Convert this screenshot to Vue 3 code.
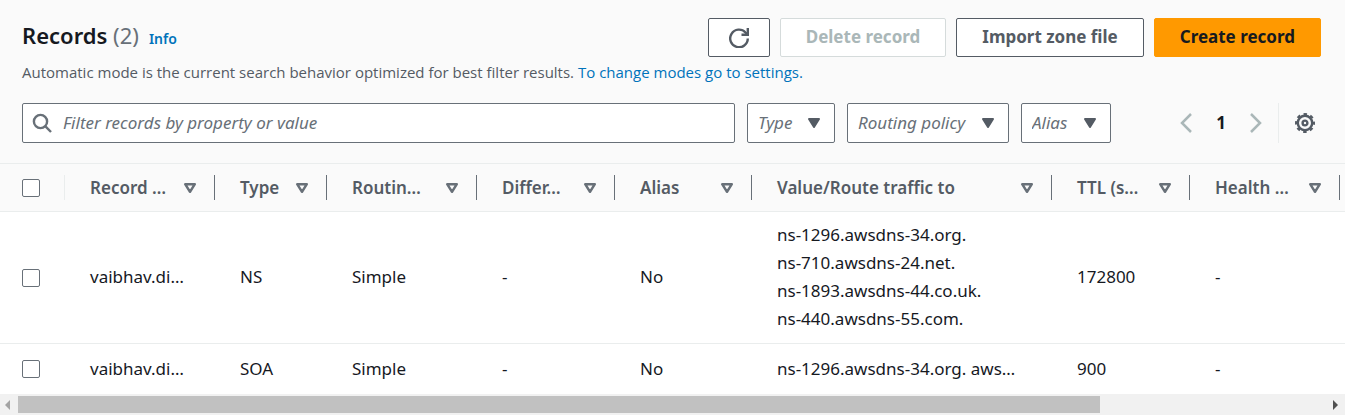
<script setup>
import { ref } from 'vue'

const filters = [
  { id: 'type', label: 'Type' },
  { id: 'routing', label: 'Routing policy' },
  { id: 'alias', label: 'Alias' },
]

const columns = [
  { id: 'name', label: 'Record …' },
  { id: 'type', label: 'Type' },
  { id: 'routing', label: 'Routin…' },
  { id: 'differ', label: 'Differ…' },
  { id: 'alias', label: 'Alias' },
  { id: 'value', label: 'Value/Route traffic to' },
  { id: 'ttl', label: 'TTL (s…' },
  { id: 'health', label: 'Health …' },
]

const records = [
  {
    name: 'vaibhav.di…',
    type: 'NS',
    routing: 'Simple',
    differ: '-',
    alias: 'No',
    value: [
      'ns-1296.awsdns-34.org.',
      'ns-710.awsdns-24.net.',
      'ns-1893.awsdns-44.co.uk.',
      'ns-440.awsdns-55.com.',
    ],
    ttl: '172800',
    health: '-',
  },
  {
    name: 'vaibhav.di…',
    type: 'SOA',
    routing: 'Simple',
    differ: '-',
    alias: 'No',
    value: ['ns-1296.awsdns-34.org. aws…'],
    ttl: '900',
    health: '-',
  },
]

const query = ref('')
const selected = ref([])

function toggleAll(event) {
  selected.value = event.target.checked ? records.map((record) => record.type) : []
}
</script>

<template>
  <main class="records">
    <header class="top">
      <div class="heading-row">
        <div class="heading">
          <h2>Records <span class="count">(2)</span></h2>
          <a class="info" href="#info">Info</a>
        </div>
        <div class="actions">
          <button class="btn btn-icon" type="button" aria-label="Refresh">
            <svg width="20" height="20" viewBox="0 0 20 20" fill="none" stroke="currentColor" stroke-width="2.4">
              <path d="M18.8 10.5A8.8 8.8 0 1 1 16.5 4.5L18.4 6.4" />
              <path d="M12.5 6.8h6.3V0" />
            </svg>
          </button>
          <button class="btn" type="button" disabled>Delete record</button>
          <button class="btn" type="button">Import zone file</button>
          <button class="btn btn-primary" type="button">Create record</button>
        </div>
      </div>
      <p class="description">
        Automatic mode is the current search behavior optimized for best filter results.
        <a href="#settings">To change modes go to settings.</a>
      </p>
      <div class="toolbar">
        <div class="search">
          <svg width="20" height="20" viewBox="0 0 20 20" fill="none" stroke="currentColor" stroke-width="2.4">
            <circle cx="8.5" cy="8.5" r="6.6" />
            <path d="M13.2 13.2 19 19" />
          </svg>
          <input v-model="query" type="text" aria-label="Filter records" placeholder="Filter records by property or value" />
        </div>
        <div v-for="filter in filters" :key="filter.id" class="filter" :class="filter.id">
          <select :aria-label="filter.label">
            <option>{{ filter.label }}</option>
          </select>
          <svg class="caret" width="14" height="12" viewBox="0 0 14 12" fill="currentColor" stroke="currentColor" stroke-width="2" stroke-linejoin="round">
            <path d="M2 2h10L7 10z" />
          </svg>
        </div>
        <nav class="pagination" aria-label="Pages">
          <button type="button" class="page-arrow" aria-label="Previous page">
            <svg width="12" height="20" viewBox="0 0 12 20" fill="none" stroke="currentColor" stroke-width="2.5">
              <path d="M11 1 2 10l9 9" />
            </svg>
          </button>
          <button type="button" class="page">1</button>
          <button type="button" class="page-arrow" aria-label="Next page">
            <svg width="12" height="20" viewBox="0 0 12 20" fill="none" stroke="currentColor" stroke-width="2.5">
              <path d="m1 1 9 9-9 9" />
            </svg>
          </button>
        </nav>
        <button type="button" class="settings" aria-label="Preferences">
          <svg width="20" height="20" viewBox="0 0 20 20" fill="none" stroke="currentColor">
            <circle cx="10" cy="10" r="7.2" stroke-width="2.4" />
            <circle cx="10" cy="10" r="9" stroke-width="2" stroke-dasharray="3.534 3.534" stroke-dashoffset="1.767" />
            <circle cx="10" cy="10" r="2.4" stroke-width="2.4" />
          </svg>
        </button>
      </div>
    </header>

    <div class="table-scroll">
      <table>
        <colgroup>
          <col class="col-check" />
          <col v-for="column in columns" :key="column.id" :class="'col-' + column.id" />
          <col />
        </colgroup>
        <thead>
          <tr>
            <th class="check-head">
              <input type="checkbox" aria-label="Select all records" :checked="selected.length === records.length" @change="toggleAll" />
            </th>
            <th v-for="column in columns" :key="column.id" scope="col">
              <div class="head">
                <span>{{ column.label }}</span>
                <svg width="14" height="12" viewBox="0 0 14 12" fill="none" stroke="currentColor" stroke-width="2.5" stroke-linejoin="round">
                  <path d="M2.2 2.2h9.6L7 9.8z" />
                </svg>
              </div>
            </th>
            <th class="rest" aria-hidden="true"></th>
          </tr>
        </thead>
        <tbody>
          <tr v-for="record in records" :key="record.type">
            <td class="check">
              <input v-model="selected" type="checkbox" :value="record.type" :aria-label="'Select ' + record.type + ' record'" />
            </td>
            <td v-for="column in columns" :key="column.id">
              <template v-if="column.id === 'value'">
                <div v-for="line in record.value" :key="line">{{ line }}</div>
              </template>
              <template v-else>{{ record[column.id] }}</template>
            </td>
            <td class="rest" aria-hidden="true"></td>
          </tr>
        </tbody>
      </table>
    </div>
    <div class="scrollbar">
      <svg class="scroll-back" width="18" height="18" viewBox="0 0 18 18"><path d="M10 4v10L5 9z" fill="currentColor" /></svg>
      <div class="track"><div class="thumb"></div></div>
      <svg class="scroll-forward" width="18" height="18" viewBox="0 0 18 18"><path d="M6 4v10l5-5z" fill="currentColor" /></svg>
    </div>
  </main>
</template>

<style>
body {
  margin: 0;
  background: #fff;
}
</style>

<style scoped>
.records {
  font-family: "Noto Sans", "Open Sans", sans-serif;
  font-size: 17px;
  line-height: 28px;
  color: #16191f;
  overflow: hidden;
}
button,
input,
select {
  font: inherit;
  color: inherit;
  box-sizing: border-box;
}
button {
  cursor: pointer;
}
a {
  color: #0073bb;
  text-decoration: none;
}
svg {
  display: block;
  flex: none;
}
.top {
  background: #fafafa;
  padding: 18px 24px 20px 22px;
  border-bottom: 1px solid #eaeded;
}
.heading-row {
  display: flex;
  justify-content: space-between;
}
.heading {
  display: flex;
  align-items: baseline;
  gap: 10px;
}
h2 {
  margin: 0;
  font-size: 22px;
  line-height: 34px;
  font-weight: 600;
}
.count {
  font-weight: 400;
  color: #687078;
}
.info {
  font-size: 14px;
  font-weight: 600;
}
.actions {
  display: flex;
  gap: 10px;
}
.btn {
  height: 39px;
  padding: 0 25px 2px;
  border: 1px solid #545b64;
  border-radius: 2px;
  background: #fff;
  color: #545b64;
  font-weight: 700;
  line-height: 25px;
  white-space: nowrap;
}
.btn-icon {
  padding: 0 20px;
}
.btn:disabled {
  border-color: #d5dbdb;
  color: #aab7b8;
  cursor: default;
}
.btn-primary {
  background: #ff9900;
  border-color: #ff9900;
  color: #16191f;
}
.description {
  margin: 3px 0 18px;
  font-family: "Open Sans", "Noto Sans", sans-serif;
  font-size: 15px;
  line-height: 25px;
  color: #545b64;
}
.toolbar {
  display: flex;
  gap: 12px;
}
.search {
  flex: 1;
  display: flex;
  align-items: center;
  gap: 11px;
  height: 40px;
  box-sizing: border-box;
  padding: 0 9px;
  border: 1px solid #687078;
  border-radius: 2px;
  background: #fff;
  color: #687078;
}
.search input {
  flex: 1;
  min-width: 0;
  padding: 0;
  border: 0;
  outline: 0;
  background: transparent;
}
.search input::placeholder {
  color: #687078;
  font-style: italic;
  opacity: 1;
}
.filter {
  position: relative;
}
.filter select {
  appearance: none;
  width: 100%;
  height: 40px;
  padding: 0 0 0 10px;
  border: 1px solid #687078;
  border-radius: 2px;
  background: #fff;
  color: #687078;
  font-style: italic;
}
.caret {
  position: absolute;
  right: 14px;
  top: 14px;
  color: #545b64;
  pointer-events: none;
}
.filter.type {
  width: 88px;
}
.filter.routing {
  width: 162px;
}
.filter.alias {
  width: 90px;
}
.pagination {
  display: flex;
  align-items: center;
  margin-left: 57px;
}
.pagination button,
.settings {
  padding: 0;
  border: 0;
  background: none;
}
.page-arrow {
  color: #aab7b8;
}
.page {
  width: 58px;
  font-weight: 700;
}
.settings {
  height: 40px;
  padding: 0 6px 0 16px;
  margin-left: 4px;
  border-left: 1px solid #eaeded;
  color: #545b64;
}
.table-scroll {
  overflow: hidden;
}
table {
  width: 100%;
  min-width: 1345px;
  table-layout: fixed;
  border-collapse: separate;
  border-spacing: 0;
}
.col-check {
  width: 65px;
}
.col-name,
.col-routing {
  width: 150px;
}
.col-type {
  width: 112px;
}
.col-differ,
.col-ttl {
  width: 138px;
}
.col-alias {
  width: 137px;
}
.col-value {
  width: 300px;
}
.col-health {
  width: 150px;
}
th,
td {
  box-sizing: border-box;
  padding: 0;
  text-align: left;
  white-space: nowrap;
}
th {
  height: 48px;
  background: #fafafa;
  border-bottom: 1px solid #eaeded;
  color: #545b64;
  font-weight: 600;
}
.head {
  display: flex;
  align-items: center;
  justify-content: space-between;
  height: 25px;
  padding: 0 17px 0 25px;
  border-right: 1px solid #687078;
}
.head svg {
  color: #687078;
}
td {
  height: 50px;
  padding: 9px 0 10px 25px;
  border-bottom: 1px solid #eaeded;
}
tbody tr:last-child td {
  border-bottom: 0;
}
td.check {
  padding: 0 0 0 22px;
}
td.rest {
  padding: 0;
}
.check-head input {
  margin: 0 0 0 22px;
}
.check-head {
  background: linear-gradient(#eaeded, #eaeded) right center / 1px 25px no-repeat #fafafa;
}
input[type="checkbox"] {
  appearance: none;
  display: block;
  width: 18px;
  height: 18px;
  border: 1px solid #687078;
  border-radius: 2px;
  background: #fff;
}
.check input {
  margin: 0;
}
input[type="checkbox"]:checked {
  background: #0073bb;
}
.scrollbar {
  display: flex;
  align-items: center;
  height: 21px;
  background: #f1f1f1;
}
.scroll-back {
  color: #a3a3a3;
}
.scroll-forward {
  color: #505050;
}
.track {
  flex: 1;
}
.thumb {
  width: 82.66%;
  height: 17px;
  background: #c1c1c1;
}
</style>
